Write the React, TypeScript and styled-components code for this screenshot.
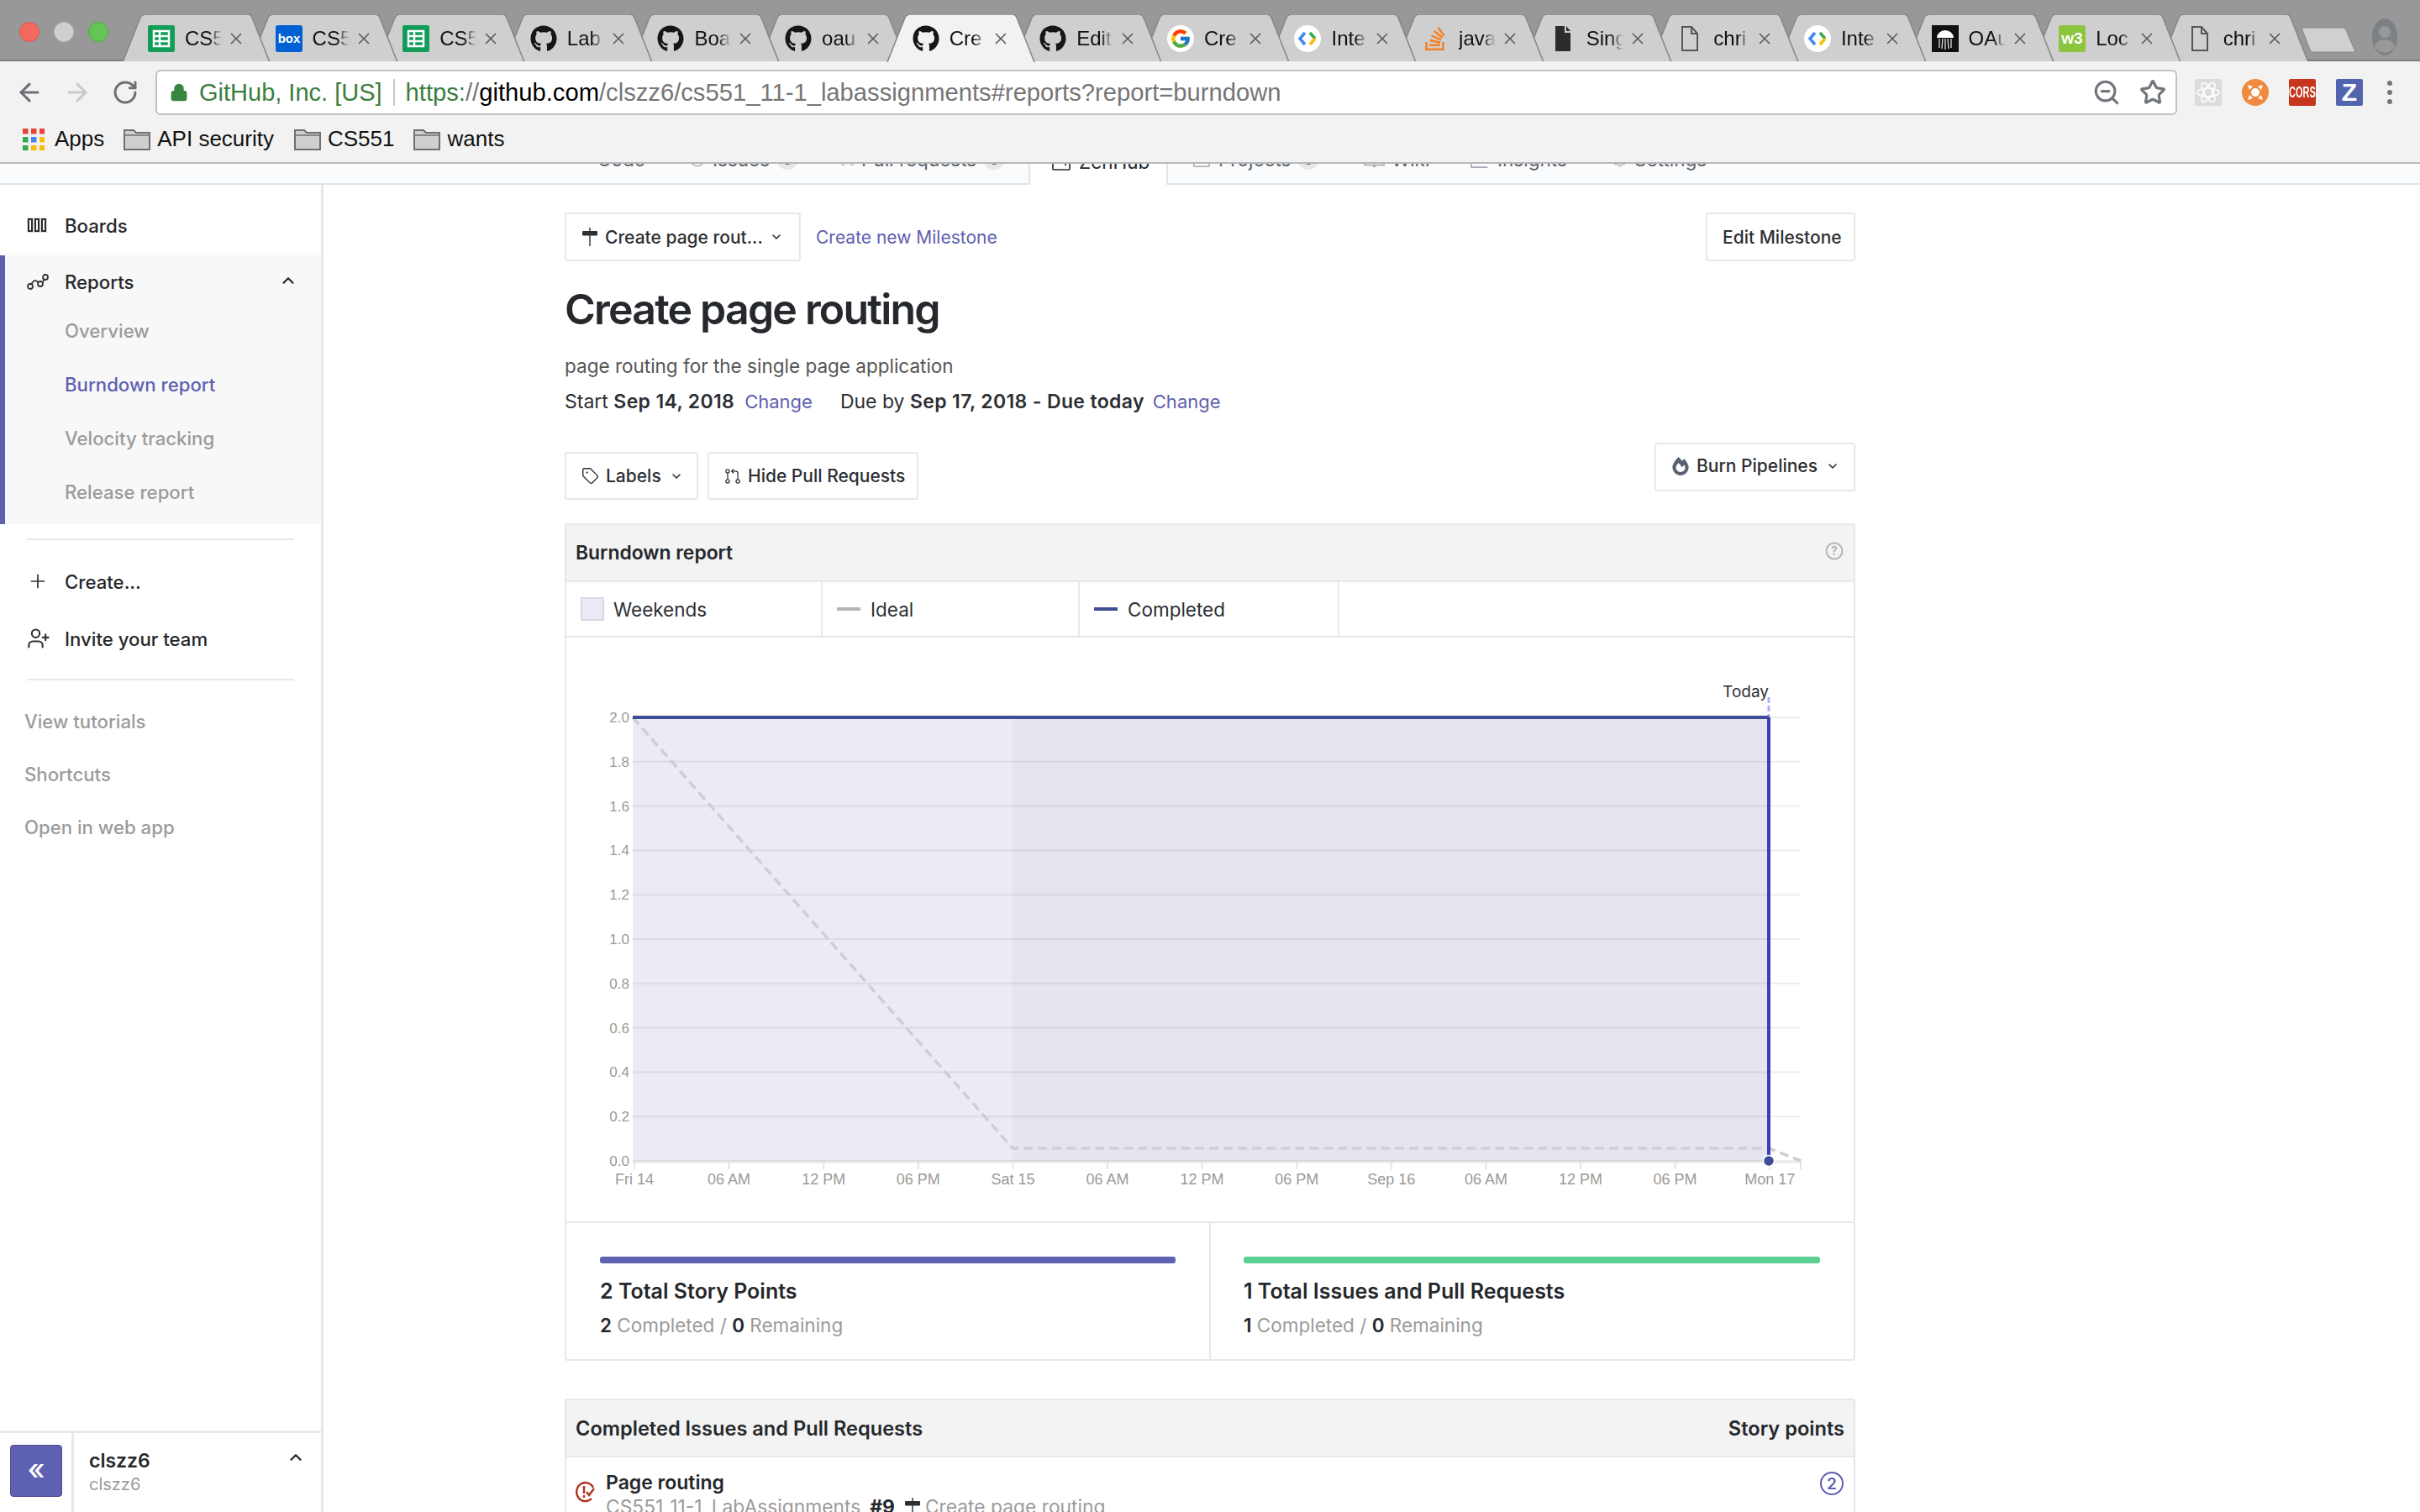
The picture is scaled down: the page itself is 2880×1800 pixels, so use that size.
import styled, { createGlobalStyle } from "styled-components";
import { ChevronDown, ChevronUp, Plus, UserPlus, X, ArrowLeft, ArrowRight, RotateCw, ZoomOut, Star, Lock, Tag } from "lucide-react";
import { FaGithub, FaStackOverflow, FaFireAlt } from "react-icons/fa";
import { FcGoogle } from "react-icons/fc";
import { GoCode, GoIssueOpened, GoGitPullRequest, GoProject, GoBook, GoGraph, GoGear } from "react-icons/go";

const GlobalStyle = createGlobalStyle`
  html, body {
    margin: 0;
    padding: 0;
    background: #fff;
  }
  * {
    box-sizing: border-box;
  }
`;

const Page = styled.div`
  width: 2880px;
  height: 1800px;
  overflow: hidden;
  font-family: Inter, "Liberation Sans", sans-serif;
  color: #24272b;
  font-size: 22px;
`;

/* browser chrome */
const Chrome = styled.div`
  position: relative;
  z-index: 2;
  height: 195px;
  background: #f2f2f2;
  border-bottom: 2px solid #b8b8b8;
  font-family: "Liberation Sans", Arial, sans-serif;
`;

const TabStrip = styled.div`
  height: 73px;
  background: #989898;
  border-bottom: 2px solid #7d7d7d;
  display: flex;
  padding-top: 17px;
`;

const Lights = styled.div`
  width: 145px;
  flex: none;
  padding: 9px 0 0 23px;
  display: flex;
  gap: 17px;
`;

const Light = styled.span<{ $color: string; $edge: string }>`
  width: 24px;
  height: 24px;
  border-radius: 50%;
  background: ${(p) => p.$color};
  border: 1px solid ${(p) => p.$edge};
`;

const Tab = styled.div<{ $active?: boolean; $order: number }>`
  position: relative;
  z-index: ${(p) => (p.$active ? 40 : 30 - p.$order)};
  flex: none;
  width: 177px;
  height: ${(p) => (p.$active ? 57 : 56)}px;
  margin-right: -25.4px;
  padding: 13px 0 0 31px;
  display: flex;
  align-items: flex-start;
`;

const TabShape = styled.svg`
  position: absolute;
  left: 0;
  top: 0;
`;

const FavSlot = styled.span`
  position: relative;
  width: 32px;
  height: 32px;
  flex: none;
  display: block;
`;

const TabTitle = styled.span`
  position: relative;
  width: 44px;
  margin-left: 12px;
  overflow: hidden;
  white-space: nowrap;
  font-size: 24px;
  line-height: 32px;
  color: #111;
  mask-image: linear-gradient(to right, #000 65%, transparent 100%);
`;

const TabClose = styled.span`
  position: relative;
  margin-left: 6px;
  height: 32px;
  display: flex;
  align-items: center;
  color: #5c5c5c;
`;

const NewTab = styled.svg`
  flex: none;
  margin: 15px 0 0 16px;
`;

const Profile = styled.svg`
  flex: none;
  margin: 5px 0 0 18px;
`;

const Toolbar = styled.div`
  height: 64px;
  padding: 10px 0 0 18px;
  display: flex;
  align-items: center;
`;

const NavButton = styled.span<{ $color: string; $gap: number }>`
  display: flex;
  color: ${(p) => p.$color};
  margin-right: ${(p) => p.$gap}px;
`;

const AddressBar = styled.div`
  width: 2406px;
  height: 54px;
  background: #fff;
  border: 2px solid #c2c2c2;
  border-radius: 6px;
  display: flex;
  align-items: center;
  padding-left: 15px;
  font-size: 29px;
  white-space: nowrap;
`;

const SecureLabel = styled.span`
  color: #3a7e40;
  margin-left: 13px;
  padding-right: 13px;
  height: 32px;
  line-height: 32px;
  border-right: 2px solid #c8c8c8;
`;

const Url = styled.span`
  margin-left: 13px;
  font-size: 29.2px;
  color: #767676;
  b {
    font-weight: 400;
    color: #000;
  }
  i {
    font-style: normal;
    color: #3a7e40;
  }
`;

const AddressIcons = styled.span`
  margin-left: auto;
  display: flex;
  align-items: center;
  gap: 22px;
  padding-right: 11px;
  color: #72767c;
`;

const Extensions = styled.div`
  margin-left: 21px;
  display: flex;
  align-items: center;
  gap: 24px;
`;

const Extension = styled.span<{ $bg: string; $round?: boolean }>`
  width: 32px;
  height: 32px;
  background: ${(p) => p.$bg};
  border-radius: ${(p) => (p.$round ? "50%" : "2px")};
  color: #fff;
  display: flex;
  align-items: center;
  justify-content: center;
  overflow: hidden;
`;

const CorsText = styled.span`
  font-size: 11px;
  font-weight: 700;
  transform: scaleY(1.6);
`;

const ZText = styled.span`
  font-size: 30px;
  font-weight: 700;
`;

const MenuDots = styled.span`
  margin-left: 5px;
  display: flex;
  flex-direction: column;
  gap: 5px;
  i {
    display: block;
    width: 6px;
    height: 6px;
    border-radius: 50%;
    background: #72767c;
  }
`;

const Bookmarks = styled.div`
  height: 54px;
  padding: 3px 0 0 27px;
  display: flex;
  align-items: center;
  font-size: 26px;
  color: #111;
`;

const Bookmark = styled.span<{ $gap: number; $inner?: number }>`
  display: flex;
  align-items: center;
  gap: ${(p) => p.$inner ?? 8}px;
  margin-right: ${(p) => p.$gap}px;
`;

/* repo tabs, mostly hidden under the browser chrome */
const RepoNav = styled.nav`
  height: 77px;
  margin-top: -52px;
  padding-left: 672px;
  background: #fafbfc;
  border-bottom: 2px solid #e1e4e8;
  display: flex;
  align-items: flex-end;
`;

const RepoTab = styled.div<{ $w: number; $pad: number; $active?: boolean }>`
  flex: none;
  width: ${(p) => p.$w}px;
  height: 50px;
  margin-bottom: ${(p) => (p.$active ? -2 : 0)}px;
  padding: 0 0 ${(p) => (p.$active ? 6 : 8)}px ${(p) => p.$pad}px;
  display: flex;
  align-items: center;
  gap: 8px;
  font-size: 22.5px;
  color: ${(p) => (p.$active ? "#24272b" : "#586069")};
  background: ${(p) => (p.$active ? "#fff" : "transparent")};
  border-left: ${(p) => (p.$active ? "2px solid #e1e4e8" : "none")};
  border-right: ${(p) => (p.$active ? "2px solid #e1e4e8" : "none")};
  svg {
    color: ${(p) => (p.$active ? "#24272b" : "#a3aab1")};
    flex: none;
  }
`;

const Count = styled.span`
  width: 26px;
  height: 26px;
  border-radius: 50%;
  background: #e6e8eb;
  color: #586069;
  font-size: 20px;
  font-weight: 600;
  text-align: center;
  line-height: 26px;
`;

const Body = styled.div`
  height: 1580px;
  display: flex;
`;

/* sidebar */
const Sidebar = styled.aside`
  flex: none;
  width: 385px;
  height: 100%;
  border-right: 3px solid #e8e8e8;
  padding-top: 14px;
  display: flex;
  flex-direction: column;
  font-weight: 500;
  font-size: 22.2px;
`;

const SideRow = styled.div`
  height: 68px;
  flex: none;
  display: flex;
  align-items: center;
  padding-left: 32px;
  color: #26282c;
`;

const SideIcon = styled.span`
  width: 45px;
  flex: none;
  display: flex;
  color: #333;
`;

const ReportsBlock = styled.div`
  height: 320px;
  margin-top: 2px;
  flex: none;
  background: #f8f8f8;
  border-left: 6px solid #5e60b0;
  padding-bottom: 7px;
`;

const ReportsHead = styled.div`
  height: 57px;
  padding: 6px 28px 0 26px;
  display: flex;
  align-items: center;
  color: #26282c;
`;

const HeadChevron = styled(ChevronUp)`
  margin: -4px 0 0 auto;
`;

const SubItem = styled.div<{ $active?: boolean }>`
  height: 64px;
  padding-left: 71px;
  display: flex;
  align-items: center;
  color: ${(p) => (p.$active ? "#5e60b0" : "#9b9b9b")};
`;

const SideDivider = styled.div<{ $top: number; $bottom: number }>`
  height: 2px;
  flex: none;
  margin: ${(p) => p.$top}px 32px ${(p) => p.$bottom}px;
  background: #e8e8e8;
`;

const SideLink = styled.div`
  height: 63px;
  flex: none;
  padding-left: 29px;
  display: flex;
  align-items: center;
  color: #9b9b9b;
`;

const SideFooter = styled.div`
  margin-top: auto;
  height: 97px;
  flex: none;
  border-top: 3px solid #e8e8e8;
  display: flex;
`;

const CollapseCell = styled.div`
  width: 88px;
  flex: none;
  height: 95px;
  border-right: 3px solid #e8e8e8;
  padding: 14px 0 0 12px;
`;

const CollapseButton = styled.div`
  width: 62px;
  height: 62px;
  border-radius: 4px;
  background: #5e60b0;
  border: 1px solid #4b4d96;
  color: #fff;
  font-size: 34px;
  line-height: 56px;
  text-align: center;
`;

const UserBlock = styled.div`
  flex: 1;
  padding: 18px 19px 0 18px;
  display: flex;
  justify-content: space-between;
  align-items: flex-start;
`;

const UserName = styled.div`
  font-weight: 600;
  font-size: 23px;
  line-height: 30px;
  color: #26282c;
`;

const UserHandle = styled.div`
  font-size: 20px;
  line-height: 26px;
  font-weight: 400;
  color: #9b9b9b;
`;

/* main column */
const Main = styled.main`
  width: 1536px;
  margin-left: 287px;
  padding-top: 33px;
  flex: none;
`;

const SpacedRow = styled.div`
  display: flex;
  justify-content: space-between;
  align-items: flex-start;
`;

const Group = styled.div<{ $gap: number; $top?: number }>`
  display: flex;
  align-items: center;
  gap: ${(p) => p.$gap}px;
  margin-top: ${(p) => p.$top ?? 0}px;
  font-size: 21px;
`;

const Button = styled.div<{ $w: number; $h?: number }>`
  width: ${(p) => p.$w}px;
  height: ${(p) => p.$h ?? 58}px;
  border: 2px solid #e8e8e8;
  border-radius: 3px;
  background: #fff;
  padding: 0 0 0 18px;
  display: flex;
  align-items: center;
  gap: 8px;
  font-weight: 500;
  font-size: 21px;
  white-space: nowrap;
  color: #2c2f33;
`;

const BurnButton = styled(Button)`
  padding-bottom: 3px;
`;

const LabelsChevron = styled(ChevronDown)`
  margin-left: 2px;
`;

const LinkText = styled.span`
  color: #5e60b0;
  font-weight: 400;
`;

const Title = styled.h1`
  margin: 27px 0 0;
  height: 60px;
  font-size: 50px;
  line-height: 60px;
  font-weight: 600;
  letter-spacing: -1.8px;
  color: #25282c;
`;

const Description = styled.p`
  margin: 22px 0 0;
  line-height: 32px;
  font-size: 22.5px;
  color: #555;
`;

const Dates = styled.p`
  margin: 10px 0 0;
  line-height: 32px;
  font-size: 23px;
  color: #2c2f33;
  display: flex;
  b {
    font-weight: 600;
    letter-spacing: 0.35px;
  }
`;

const DateLink = styled(LinkText)<{ $left: number; $right?: number }>`
  font-size: 22px;
  margin-left: ${(p) => p.$left}px;
  margin-right: ${(p) => p.$right ?? 0}px;
`;

const FilterRow = styled(SpacedRow)`
  margin-top: 33px;
`;

const Panel = styled.section<{ $top: number }>`
  margin-top: ${(p) => p.$top}px;
  border: 2px solid #e8e8e8;
  border-radius: 3px;
  background: #fff;
`;

const PanelHead = styled.div<{ $h: number; $size: number }>`
  height: ${(p) => p.$h}px;
  background: #f3f3f3;
  border-bottom: 2px solid #e8e8e8;
  padding: 0 11px 0 11px;
  display: flex;
  justify-content: space-between;
  align-items: center;
  font-weight: 600;
  font-size: ${(p) => p.$size}px;
  color: #25282c;
`;

const HelpIcon = styled.svg`
  margin: -5px 1px 0 0;
`;

const Legend = styled.div`
  height: 66px;
  border-bottom: 2px solid #e8e8e8;
  display: flex;
`;

const LegendCell = styled.div<{ $w: number; $gap?: number }>`
  width: ${(p) => p.$w}px;
  border-right: 2px solid #e8e8e8;
  padding-left: 17px;
  display: flex;
  align-items: center;
  gap: ${(p) => p.$gap ?? 12}px;
  font-size: 22.5px;
  color: #2c2f33;
`;

const Swatch = styled.span`
  width: 28px;
  height: 28px;
  background: #ebebf7;
  border: 2px solid #d8d9e4;
`;

const LegendDash = styled.span<{ $color: string }>`
  width: 28px;
  height: 4px;
  background: ${(p) => p.$color};
`;

const ChartBox = styled.div`
  height: 697px;
  border-bottom: 2px solid #e8e8e8;
  svg {
    display: block;
  }
`;

const AxisText = styled.text`
  font-family: "Liberation Sans", Arial, sans-serif;
  fill: #9c9a98;
`;

const TodayText = styled.text`
  font-family: Inter, sans-serif;
  font-size: 19px;
  fill: #2c2f33;
`;

const Stats = styled.div`
  height: 162px;
  display: flex;
`;

const Stat = styled.div<{ $w: number; $pad: number; $right: number; $line?: boolean }>`
  width: ${(p) => p.$w}px;
  padding: 40px ${(p) => p.$right}px 0 ${(p) => p.$pad}px;
  border-right: ${(p) => (p.$line ? "2px solid #e8e8e8" : "none")};
`;

const StatBar = styled.div<{ $color: string }>`
  height: 8px;
  border-radius: 3px;
  background: ${(p) => p.$color};
`;

const StatTitle = styled.div`
  margin-top: 16px;
  font-size: 25px;
  line-height: 34px;
  font-weight: 600;
  color: #25282c;
`;

const StatSub = styled.div`
  margin-top: 8px;
  font-size: 22.5px;
  line-height: 32px;
  color: #9b9b9b;
  b {
    font-weight: 600;
    color: #25282c;
  }
`;

const IssueRow = styled.div`
  height: 120px;
  display: flex;
  padding: 14px 12px 0 11px;
  align-items: flex-start;
`;

const IssueIcon = styled.svg`
  flex: none;
  margin-top: 14px;
`;

const IssueBody = styled.div`
  flex: 1;
  margin-left: 12px;
`;

const IssueName = styled.div`
  font-size: 23px;
  line-height: 32px;
  font-weight: 600;
`;

const IssueMeta = styled.div`
  margin-top: -2px;
  display: flex;
  align-items: center;
  gap: 5px;
  font-size: 22.8px;
  line-height: 30px;
  color: #9b9b9b;
  b {
    font-weight: 700;
    color: #25282c;
    margin: 0 6px;
  }
`;

const PointBadge = styled.span`
  flex: none;
  width: 28px;
  height: 28px;
  margin-top: 3px;
  border: 2px solid #5e60b0;
  border-radius: 50%;
  color: #5e60b0;
  font-size: 19px;
  font-weight: 600;
  line-height: 25px;
  text-align: center;
`;

function SheetsIcon() {
  return (
    <svg width="32" height="32" viewBox="0 0 32 32">
      <rect width="32" height="32" rx="2" fill="#0f9d58" />
      <path d="M7 7h18v18H7zM7 13h18M7 19h18M14 7v18" fill="none" stroke="#fff" strokeWidth="2.5" />
    </svg>
  );
}

function BoxIcon() {
  return (
    <svg width="32" height="32" viewBox="0 0 32 32">
      <rect width="32" height="32" rx="3" fill="#0061d5" />
      <text x="16" y="21" fontSize="15" fontWeight="700" fill="#fff" textAnchor="middle" fontFamily="Liberation Sans, sans-serif">
        box
      </text>
    </svg>
  );
}

function DevIcon() {
  return (
    <svg width="32" height="32" viewBox="0 0 32 32">
      <circle cx="16" cy="16" r="16" fill="#fff" />
      <path d="M13 9l-6 7 6 7" fill="none" stroke="#4285f4" strokeWidth="3.5" />
      <path d="M19 9l6 7" fill="none" stroke="#34a853" strokeWidth="3.5" />
      <path d="M25 16l-6 7" fill="none" stroke="#fbbc05" strokeWidth="3.5" />
    </svg>
  );
}

function DocIcon({ solid }: { solid?: boolean }) {
  return (
    <svg width="32" height="32" viewBox="0 0 32 32">
      {solid ? (
        <path d="M7 1h11v8h7v22H7z M20 1l5 6h-5z" fill="#2c2c2c" />
      ) : (
        <path d="M7 2h11l7 8v20H7zM18 2v8h7" fill="none" stroke="#555" strokeWidth="2" />
      )}
    </svg>
  );
}

function JellyIcon() {
  return (
    <svg width="32" height="32" viewBox="0 0 32 32">
      <rect width="32" height="32" fill="#111" />
      <path d="M6 15a10 9 0 0 1 20 0z" fill="#fff" />
      <path d="M9 16v11M13 16l-1 12M16 16v13M19 16l1 12M23 16v11" stroke="#ddd" strokeWidth="1.3" />
    </svg>
  );
}

function W3Icon() {
  return (
    <svg width="32" height="32" viewBox="0 0 32 32">
      <rect width="32" height="32" rx="3" fill="#8cc63f" />
      <text x="16" y="22" fontSize="19" fontWeight="700" fill="#fff" textAnchor="middle" fontFamily="Liberation Sans, sans-serif">
        w3
      </text>
    </svg>
  );
}

function Favicon({ kind }: { kind: string }) {
  if (kind === "sheets") return <SheetsIcon />;
  if (kind === "box") return <BoxIcon />;
  if (kind === "github") return <FaGithub size={32} color="#161616" />;
  if (kind === "google") {
    return (
      <svg width="32" height="32" viewBox="0 0 32 32">
        <circle cx="16" cy="16" r="16" fill="#fff" />
        <FcGoogle x="3" y="3" size={26} />
      </svg>
    );
  }
  if (kind === "dev") return <DevIcon />;
  if (kind === "stack") return <FaStackOverflow size={32} color="#f48024" />;
  if (kind === "doc") return <DocIcon />;
  if (kind === "solid") return <DocIcon solid />;
  if (kind === "jelly") return <JellyIcon />;
  return <W3Icon />;
}

const tabs = [
  { icon: "sheets", title: "CS5" },
  { icon: "box", title: "CS5" },
  { icon: "sheets", title: "CS5" },
  { icon: "github", title: "Lab" },
  { icon: "github", title: "Boa" },
  { icon: "github", title: "oau" },
  { icon: "github", title: "Cre", active: true },
  { icon: "github", title: "Edit" },
  { icon: "google", title: "Cre" },
  { icon: "dev", title: "Inte" },
  { icon: "stack", title: "java" },
  { icon: "solid", title: "Sing" },
  { icon: "doc", title: "chri" },
  { icon: "dev", title: "Inte" },
  { icon: "jelly", title: "OAu" },
  { icon: "w3", title: "Loc" },
  { icon: "doc", title: "chri" },
];

function BrowserTab({ icon, title, active, order }: { icon: string; title: string; active?: boolean; order: number }) {
  return (
    <Tab $active={active} $order={order}>
      <TabShape width="177" height={active ? 57 : 56} viewBox={`0 0 177 ${active ? 57 : 56}`}>
        <path
          d="M1 57L22 4Q24 0 28 0H150Q153 0 155 4L176 57"
          fill={active ? "#f2f2f2" : "#cfcfcf"}
          stroke="#868686"
          strokeWidth="1.5"
        />
      </TabShape>
      <FavSlot>
        <Favicon kind={icon} />
      </FavSlot>
      <TabTitle>{title}</TabTitle>
      <TabClose>
        <X size={22} strokeWidth={1.8} />
      </TabClose>
    </Tab>
  );
}

function FolderIcon() {
  return (
    <svg width="32" height="26" viewBox="0 0 32 26">
      <path d="M1 25V2h11l3 3h16v20z" fill="#cfcfcf" stroke="#6f6f6f" strokeWidth="2" />
      <path d="M1 8h30" stroke="#6f6f6f" strokeWidth="1.5" />
    </svg>
  );
}

function AppsIcon() {
  const colors = ["#ea4335", "#ea4335", "#ea4335", "#34a853", "#4285f4", "#fbbc05", "#34a853", "#fbbc05", "#fbbc05"];
  return (
    <svg width="26" height="26" viewBox="0 0 26 26">
      {colors.map((c, i) => (
        <rect key={i} x={(i % 3) * 10} y={Math.floor(i / 3) * 10} width="6.5" height="6.5" fill={c} />
      ))}
    </svg>
  );
}

function MilestoneIcon() {
  return (
    <svg width="20" height="22" viewBox="0 0 20 22">
      <path d="M10 0v22" stroke="#2c2f33" strokeWidth="1.4" />
      <rect x="1" y="4" width="18" height="5.500" rx="1" fill="#2c2f33" />
    </svg>
  );
}

function BoardsIcon() {
  return (
    <svg width="24" height="18" viewBox="0 0 24 18">
      <rect width="24" height="18" fill="#dcdcdc" />
      <path d="M2 2h4v14H2zM10 2h4v14h-4zM18 2h4v14h-4z" fill="#fff" stroke="#2c2c2c" strokeWidth="2" />
    </svg>
  );
}

function ReportsIcon() {
  return (
    <svg width="26" height="20" viewBox="0 0 26 20">
      <path d="M4 15Q9 4 13 10T22 4" fill="none" stroke="#333" strokeWidth="1.8" />
      <circle cx="4" cy="15" r="3" fill="#f8f8f8" stroke="#333" strokeWidth="1.8" />
      <circle cx="16" cy="12" r="3" fill="#f8f8f8" stroke="#333" strokeWidth="1.8" />
      <circle cx="22" cy="4" r="3" fill="#f8f8f8" stroke="#333" strokeWidth="1.8" />
    </svg>
  );
}

const repoTabs = [
  { w: 134, pad: 14, size: 17, label: "Code", Icon: GoCode },
  { w: 180, pad: 14, size: 20, label: "Issues", Icon: GoIssueOpened, count: true },
  { w: 238, pad: 14, size: 17, label: "Pull requests", Icon: GoGitPullRequest, count: true },
  { w: 166, pad: 24, size: 26, label: "ZenHub", Icon: GoProject, active: true },
  { w: 219, pad: 28, size: 24, label: "Projects", Icon: GoProject, count: true },
  { w: 126, pad: 14, size: 25, label: "Wiki", Icon: GoBook },
  { w: 169, pad: 14, size: 25, label: "Insights", Icon: GoGraph },
  { w: 140, pad: 14, size: 19, label: "Settings", Icon: GoGear },
];

const yLabels = ["2.0", "1.8", "1.6", "1.4", "1.2", "1.0", "0.8", "0.6", "0.4", "0.2", "0.0"];
const xLabels = ["Fri 14", "06 AM", "12 PM", "06 PM", "Sat 15", "06 AM", "12 PM", "06 PM", "Sep 16", "06 AM", "12 PM", "06 PM", "Mon 17"];

function BurndownChart() {
  return (
    <svg width="1532" height="695" viewBox="674 759 1532 695">
      <rect x="753" y="854" width="1352" height="529" fill="#ebebf5" />
      <rect x="1205" y="854" width="900" height="529" fill="#e5e5f0" />
      {yLabels.map((label, i) => {
        const y = 854 + i * 52.8;
        return (
          <g key={label}>
            <path d={`M753 ${y}H2142`} stroke="#000" strokeOpacity="0.07" strokeWidth="2" />
            <AxisText x="749" y={y + 6} fontSize="17" textAnchor="end">
              {label}
            </AxisText>
          </g>
        );
      })}
      <path d="M753 1383.500H2143" stroke="#e8e8e8" strokeWidth="2" />
      {xLabels.map((label, i) => {
        const x = 755 + i * 112.6;
        return (
          <g key={i}>
            <path d={`M${x} 1383V1392`} stroke="#e4e4e4" strokeWidth="2" />
            <AxisText x={x} y="1410" fontSize="18" textAnchor="middle">
              {label}
            </AxisText>
          </g>
        );
      })}
      <path d="M2143 1380V1392" stroke="#e4e4e4" strokeWidth="2" />
      <path d="M753 854L1205 1367H2105L2143 1382" fill="none" stroke="#cfcfd1" strokeWidth="3.5" strokeDasharray="11 6" />
      <path d="M2105 830V854" stroke="#b3b0f8" strokeWidth="3" strokeDasharray="7 3" />
      <path d="M753 854H2105" stroke="#3f4d96" strokeWidth="4" />
      <path d="M2105 854V1382" stroke="#3b40b8" strokeWidth="4" />
      <circle cx="2105" cy="1382" r="6.500" fill="#3f4d96" stroke="#fff" strokeWidth="1.5" />
      <TodayText x="2105" y="830" textAnchor="end">
        Today
      </TodayText>
    </svg>
  );
}

function App() {
  return (
    <Page>
      <GlobalStyle />
      <Chrome>
        <TabStrip>
          <Lights>
            <Light $color="#f4695f" $edge="#d9534a" />
            <Light $color="#cfcfcf" $edge="#bdbdbd" />
            <Light $color="#62c554" $edge="#4fa943" />
          </Lights>
          {tabs.map((t, i) => (
            <BrowserTab key={i} icon={t.icon} title={t.title} active={t.active} order={i} />
          ))}
          <NewTab width="66" height="31" viewBox="0 0 66 31">
            <path d="M1 1H50Q53 1 54 4L65 30H14Q12 30 11 27z" fill="#d0d0d0" stroke="#8a8a8a" strokeWidth="1" />
          </NewTab>
          <Profile width="32" height="44" viewBox="0 0 32 44">
            <ellipse cx="16" cy="22" rx="15" ry="22" fill="#7c8087" />
            <circle cx="16" cy="16" r="7" fill="#989898" />
            <path d="M4 34a12 9 0 0 1 24 0a14 14 0 0 1-24 0z" fill="#989898" />
          </Profile>
        </TabStrip>
        <Toolbar>
          <NavButton $color="#6c7075" $gap={23}>
            <ArrowLeft size={34} strokeWidth={2.2} />
          </NavButton>
          <NavButton $color="#c9c9c9" $gap={24}>
            <ArrowRight size={34} strokeWidth={2.2} />
          </NavButton>
          <NavButton $color="#6c7075" $gap={20}>
            <RotateCw size={32} strokeWidth={2.2} />
          </NavButton>
          <AddressBar>
            <Lock size={22} fill="#3a8541" color="#3a8541" strokeWidth={2.5} />
            <SecureLabel>GitHub, Inc. [US]</SecureLabel>
            <Url>
              <i>https:</i>//<b>github.com</b>/clszz6/cs551_11-1_labassignments#reports?report=burndown
            </Url>
            <AddressIcons>
              <ZoomOut size={34} strokeWidth={2.2} />
              <Star size={32} strokeWidth={2.4} />
            </AddressIcons>
          </AddressBar>
          <Extensions>
            <Extension $bg="#dcdcdc">
              <svg width="28" height="30" viewBox="0 0 28 30" fill="none" stroke="#fff" strokeWidth="1.6">
                <ellipse cx="14" cy="15" rx="13" ry="5" />
                <ellipse cx="14" cy="15" rx="13" ry="5" transform="rotate(60 14 15)" />
                <ellipse cx="14" cy="15" rx="13" ry="5" transform="rotate(120 14 15)" />
              </svg>
            </Extension>
            <Extension $bg="#ef8a3e" $round>
              <svg width="24" height="24" viewBox="0 0 24 24" fill="#fff">
                <circle cx="12" cy="12" r="5" />
                <path d="M3 3l6 2-4 4zM21 3l-2 6-4-4zM3 21l2-6 4 4zM21 21l-6-2 4-4z" />
              </svg>
            </Extension>
            <Extension $bg="#c5361c">
              <CorsText>CORS</CorsText>
            </Extension>
            <Extension $bg="#5264ae">
              <ZText>Z</ZText>
            </Extension>
            <MenuDots>
              <i />
              <i />
              <i />
            </MenuDots>
          </Extensions>
        </Toolbar>
        <Bookmarks>
          <Bookmark $gap={23} $inner={12}>
            <AppsIcon />
            <span>Apps</span>
          </Bookmark>
          <Bookmark $gap={24}>
            <FolderIcon />
            <span>API security</span>
          </Bookmark>
          <Bookmark $gap={23}>
            <FolderIcon />
            <span>CS551</span>
          </Bookmark>
          <Bookmark $gap={0}>
            <FolderIcon />
            <span>wants</span>
          </Bookmark>
        </Bookmarks>
      </Chrome>

      <RepoNav>
        {repoTabs.map((t) => (
          <RepoTab key={t.label} $w={t.w} $pad={t.pad} $active={t.active}>
            <t.Icon size={t.size} />
            <span>{t.label}</span>
            {t.count && <Count>0</Count>}
          </RepoTab>
        ))}
      </RepoNav>

      <Body>
        <Sidebar>
          <SideRow>
            <SideIcon>
              <BoardsIcon />
            </SideIcon>
            Boards
          </SideRow>
          <ReportsBlock>
            <ReportsHead>
              <SideIcon>
                <ReportsIcon />
              </SideIcon>
              Reports
              <HeadChevron size={22} strokeWidth={2.4} />
            </ReportsHead>
            <SubItem>Overview</SubItem>
            <SubItem $active>Burndown report</SubItem>
            <SubItem>Velocity tracking</SubItem>
            <SubItem>Release report</SubItem>
          </ReportsBlock>
          <SideDivider $top={17} $bottom={15} />
          <SideRow>
            <SideIcon>
              <Plus size={26} strokeWidth={1.6} />
            </SideIcon>
            Create...
          </SideRow>
          <SideRow>
            <SideIcon>
              <UserPlus size={28} strokeWidth={1.8} />
            </SideIcon>
            Invite your team
          </SideRow>
          <SideDivider $top={14} $bottom={17} />
          <SideLink>View tutorials</SideLink>
          <SideLink>Shortcuts</SideLink>
          <SideLink>Open in web app</SideLink>
          <SideFooter>
            <CollapseCell>
              <CollapseButton>«</CollapseButton>
            </CollapseCell>
            <UserBlock>
              <div>
                <UserName>clszz6</UserName>
                <UserHandle>clszz6</UserHandle>
              </div>
              <ChevronUp size={22} strokeWidth={2.6} color="#26282c" />
            </UserBlock>
          </SideFooter>
        </Sidebar>

        <Main>
          <SpacedRow>
            <Group $gap={18}>
              <Button $w={281}>
                <MilestoneIcon />
                Create page rout...
                <ChevronDown size={16} strokeWidth={2.4} />
              </Button>
              <LinkText>Create new Milestone</LinkText>
            </Group>
            <Button $w={178}>Edit Milestone</Button>
          </SpacedRow>
          <Title>Create page routing</Title>
          <Description>page routing for the single page application</Description>
          <Dates>
            Start&nbsp;<b>Sep 14, 2018</b>
            <DateLink $left={12} $right={33}>Change</DateLink>
            Due by&nbsp;<b>Sep 17, 2018 - Due today</b>
            <DateLink $left={10}>Change</DateLink>
          </Dates>
          <FilterRow>
            <Group $gap={11} $top={11}>
              <Button $w={159} $h={57}>
                <Tag size={21} strokeWidth={1.6} />
                Labels
                <LabelsChevron size={16} strokeWidth={2.4} />
              </Button>
              <Button $w={251} $h={57}>
                <GoGitPullRequest size={20} />
                Hide Pull Requests
              </Button>
            </Group>
            <BurnButton $w={239}>
              <FaFireAlt size={22} color="#5a6170" />
              Burn Pipelines
              <LabelsChevron size={16} strokeWidth={2.4} />
            </BurnButton>
          </FilterRow>

          <Panel $top={28}>
            <PanelHead $h={68} $size={22.9}>
              Burndown report
              <HelpIcon width="22" height="22" viewBox="0 0 22 22">
                <circle cx="11" cy="11" r="9.500" fill="none" stroke="#b5b5b5" strokeWidth="2" />
                <text x="11" y="16" fontSize="14" fontWeight="700" fill="#b5b5b5" textAnchor="middle" fontFamily="Inter, sans-serif">
                  ?
                </text>
              </HelpIcon>
            </PanelHead>
            <Legend>
              <LegendCell $w={305} $gap={11}>
                <Swatch />
                Weekends
              </LegendCell>
              <LegendCell $w={306}>
                <LegendDash $color="#b5b5b5" />
                Ideal
              </LegendCell>
              <LegendCell $w={309}>
                <LegendDash $color="#3f4d96" />
                Completed
              </LegendCell>
            </Legend>
            <ChartBox>
              <BurndownChart />
            </ChartBox>
            <Stats>
              <Stat $w={767} $pad={40} $right={40} $line>
                <StatBar $color="#5e62b3" />
                <StatTitle>2 Total Story Points</StatTitle>
                <StatSub>
                  <b>2</b> Completed / <b>0</b> Remaining
                </StatSub>
              </Stat>
              <Stat $w={765} $pad={39} $right={40}>
                <StatBar $color="#5ccf95" />
                <StatTitle>1 Total Issues and Pull Requests</StatTitle>
                <StatSub>
                  <b>1</b> Completed / <b>0</b> Remaining
                </StatSub>
              </Stat>
            </Stats>
          </Panel>

          <Panel $top={45}>
            <PanelHead $h={68} $size={23.6}>
              <span>Completed Issues and Pull Requests</span>
              <span>Story points</span>
            </PanelHead>
            <IssueRow>
              <IssueIcon width="24" height="26" viewBox="0 0 24 26" fill="none" stroke="#b0301a" strokeWidth="2.4">
                <path d="M21 8A10.500 11 0 1 0 19 21" />
                <path d="M10 6v9M10 17v3" />
                <path d="M13 13l3 4 6-8" />
              </IssueIcon>
              <IssueBody>
                <IssueName>Page routing</IssueName>
                <IssueMeta>
                  CS551_11-1_LabAssignments
                  <b>#9</b>
                  <MilestoneIcon />
                  Create page routing
                </IssueMeta>
              </IssueBody>
              <PointBadge>2</PointBadge>
            </IssueRow>
          </Panel>
        </Main>
      </Body>
    </Page>
  );
}

export default App;
